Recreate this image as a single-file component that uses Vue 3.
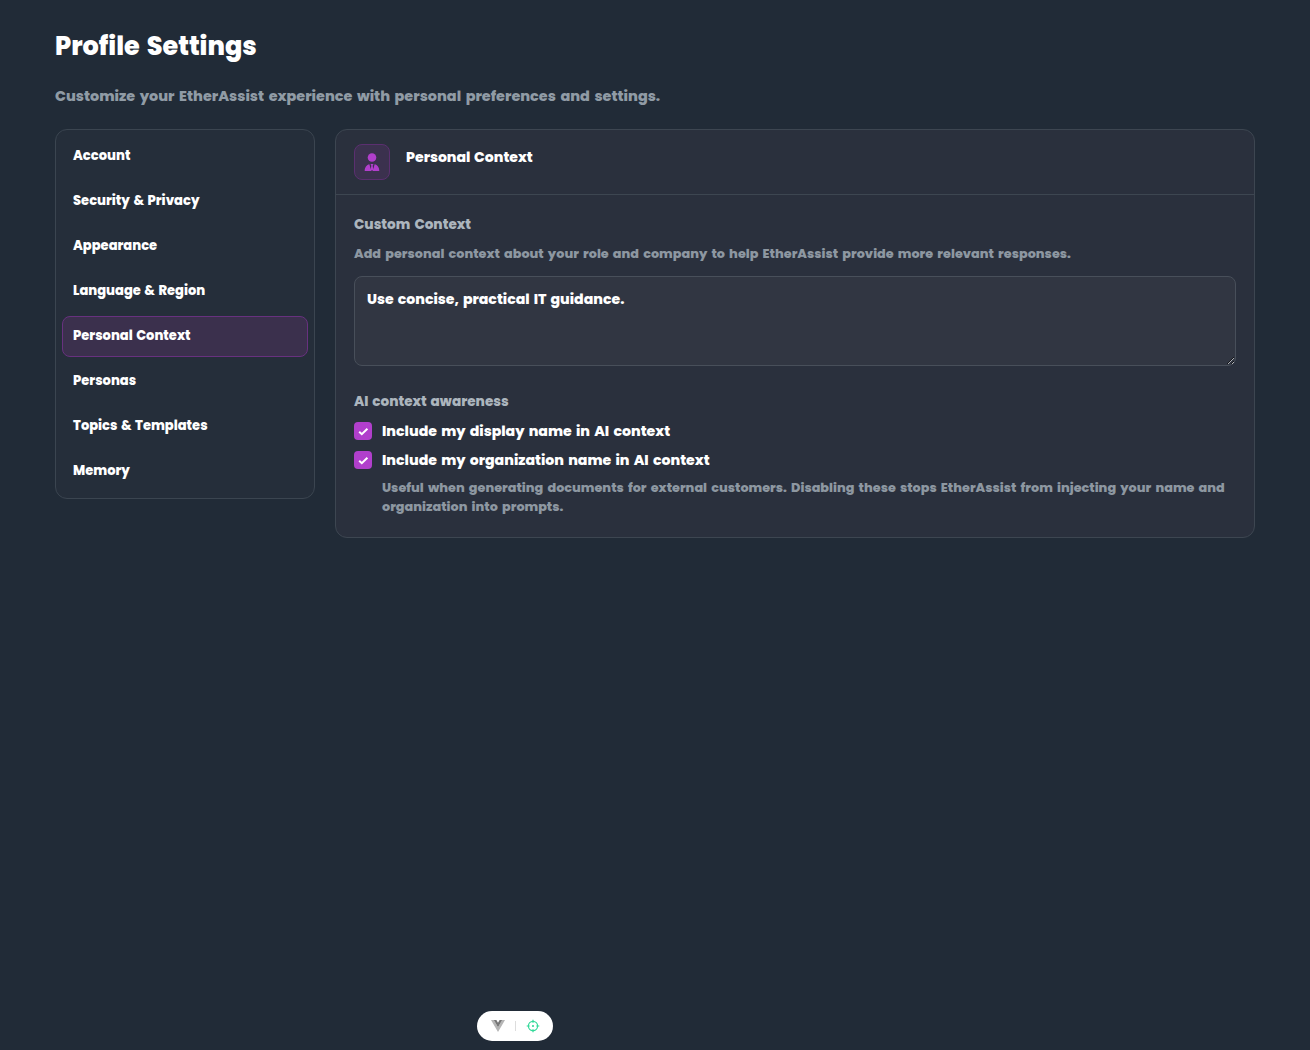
<template>
  <div class="settings-page">
    <header class="page-header">
      <h1 class="page-title">Profile Settings</h1>
      <p class="page-subtitle">Customize your EtherAssist experience with personal preferences and settings.</p>
    </header>

    <div class="settings-layout">
      <!-- Section navigation -->
      <nav class="settings-nav">
        <button
          v-for="section in sections"
          :key="section"
          type="button"
          class="nav-item"
          :class="{ active: section === activeSection }"
          @click="activeSection = section"
        >
          <span>{{ section }}</span>
        </button>
      </nav>

      <!-- Personal context panel -->
      <section class="panel">
        <div class="panel-header">
          <div class="panel-icon">
            <svg viewBox="0 0 16 20" width="16" height="20">
              <circle cx="8" cy="5.5" r="4.3" />
              <path d="M.7 19c0-3.7 1.9-6.3 4.7-6.8L7.2 19ZM15.3 19c0-3.7-1.9-6.3-4.7-6.8L8.8 19ZM6.5 12.1h3l-.8 1.6.6 3.8L8 19l-1.3-1.5.6-3.8Z" />
            </svg>
          </div>
          <h2 class="panel-title">Personal Context</h2>
        </div>

        <div class="panel-body">
          <label class="field-label" for="custom-context">Custom Context</label>
          <p class="field-hint">Add personal context about your role and company to help EtherAssist provide more relevant responses.</p>
          <textarea id="custom-context" v-model="customContext" class="context-input" spellcheck="false"></textarea>

          <div class="field-label awareness-label">AI context awareness</div>
          <label v-for="option in options" :key="option.label" class="check-row">
            <input v-model="option.checked" type="checkbox" class="check-input" />
            <span class="check-box">
              <svg v-if="option.checked" viewBox="0 0 18 18" width="18" height="18">
                <path d="m5.2 9.7 2.6 2.5 5.6-5.5" />
              </svg>
            </span>
            <span class="check-label">{{ option.label }}</span>
          </label>
          <p class="check-hint">Useful when generating documents for external customers. Disabling these stops EtherAssist from injecting your name and organization into prompts.</p>
        </div>
      </section>
    </div>

    <!-- Devtools pill -->
    <div class="devtools">
      <svg class="devtools-logo" viewBox="0 0 14 12" width="14" height="12">
        <path d="M0 0h2.8L7 7.2 11.2 0H14L7 12Z" fill="#b5b5b5" />
        <path d="M2.8 0h2.6L7 2.8 8.6 0h2.6L7 7.2Z" fill="#777" />
      </svg>
      <span class="devtools-divider"></span>
      <svg class="devtools-target" viewBox="0 0 14 14" width="14" height="14">
        <circle cx="7" cy="7" r="4.6" />
        <path d="M7 .7v3M7 10.3v3M.7 7h3M10.3 7h3" />
        <circle cx="7" cy="7" r=".5" />
      </svg>
    </div>
  </div>
</template>

<script setup>
import { reactive, ref } from 'vue'

const sections = [
  'Account',
  'Security & Privacy',
  'Appearance',
  'Language & Region',
  'Personal Context',
  'Personas',
  'Topics & Templates',
  'Memory'
]

const activeSection = ref('Personal Context')
const customContext = ref('Use concise, practical IT guidance.')

const options = reactive([
  { label: 'Include my display name in AI context', checked: true },
  { label: 'Include my organization name in AI context', checked: true }
])
</script>

<style>
body {
  background: #212b37;
}
</style>

<style scoped>
.settings-page {
  width: 1200px;
  min-height: 1050px;
  margin: 0 auto;
  padding-top: 28px;
  box-sizing: border-box;
  color: #fff;
  font-family: Poppins, Inter, "Liberation Sans", sans-serif;
  font-weight: 800;
  word-spacing: 1.6px;
}

.page-title {
  margin: 0;
  font-size: 25.5px;
  line-height: 36px;
  font-weight: 800;
  word-spacing: 2px;
}

.page-subtitle {
  margin: 20px 0 0;
  font-size: 14.4px;
  line-height: 24px;
  color: #909ba5;
  word-spacing: 1.8px;
  white-space: nowrap;
}

.settings-layout {
  display: grid;
  grid-template-columns: 260px 1fr;
  align-items: start;
  gap: 20px;
  margin-top: 21px;
}

.settings-nav {
  display: flex;
  flex-direction: column;
  gap: 4px;
  padding: 6px;
  border: 1px solid #3b4550;
  border-radius: 12px;
  background: #252e3a;
}

.nav-item {
  height: 41px;
  padding: 0 10px 1px;
  border: 1px solid transparent;
  border-radius: 8px;
  background: transparent;
  color: #fff;
  font: inherit;
  font-size: 13.05px;
  word-spacing: 1px;
  text-align: left;
  cursor: pointer;
}

.nav-item.active {
  border-color: #68317f;
  background: #3b304d;
}

.panel {
  border: 1px solid #3d4651;
  border-radius: 12px;
  background: #2a303d;
}

.panel-header {
  display: flex;
  gap: 16px;
  padding: 14px 18px;
  border-bottom: 1px solid #3d4651;
}

.panel-icon {
  display: flex;
  align-items: center;
  justify-content: center;
  width: 36px;
  height: 36px;
  box-sizing: border-box;
  border: 1px solid #5b2f70;
  border-radius: 8px;
  background: #3b314e;
}

.panel-icon svg {
  fill: #b13fcc;
}

.panel-title {
  margin: 0;
  font-size: 14.08px;
  line-height: 26px;
  font-weight: 800;
  word-spacing: 1px;
}

.panel-body {
  padding: 19px 18px 21px;
}

.field-label {
  display: block;
  font-size: 13.6px;
  line-height: 22px;
  color: #acb5bd;
}

.field-hint {
  margin: 8px 0 12px;
  font-size: 12.8px;
  line-height: 20px;
  color: #8d97a1;
  word-spacing: 1.7px;
  white-space: nowrap;
}

.context-input {
  display: block;
  width: 100%;
  height: 90px;
  padding: 10px 12px;
  box-sizing: border-box;
  border: 1px solid #484f5a;
  border-radius: 8px;
  outline: none;
  background: #313642;
  color: #fff;
  font: inherit;
  font-size: 14.1px;
  line-height: 24px;
  word-spacing: 1.3px;
  resize: vertical;
}

.awareness-label {
  margin-top: 25px;
  margin-bottom: 6px;
  word-spacing: 1.2px;
}

.check-row {
  display: flex;
  align-items: center;
  gap: 10px;
  height: 24px;
  margin-bottom: 5px;
  cursor: pointer;
}

.check-input {
  display: none;
}

.check-box {
  display: flex;
  width: 18px;
  height: 18px;
  border-radius: 4px;
  background: #b13fcc;
}

.check-box path {
  fill: none;
  stroke: #fff;
  stroke-width: 2;
}

.check-label {
  font-size: 14.13px;
  word-spacing: 1.5px;
}

.check-hint {
  margin: 6px 0 0 28px;
  font-size: 12.8px;
  line-height: 19px;
  color: #8d97a1;
  word-spacing: 1.7px;
}

.devtools {
  position: fixed;
  left: 477px;
  bottom: 9px;
  display: flex;
  align-items: center;
  width: 76px;
  height: 30px;
  padding: 0 13px 0 14px;
  box-sizing: border-box;
  border-radius: 15px;
  background: #fff;
}

.devtools-divider {
  width: 1px;
  height: 10px;
  margin: 0 10px;
  background: #ddd;
}

.devtools-target {
  fill: none;
  stroke: #35d99a;
  stroke-width: 1.2;
}
</style>
